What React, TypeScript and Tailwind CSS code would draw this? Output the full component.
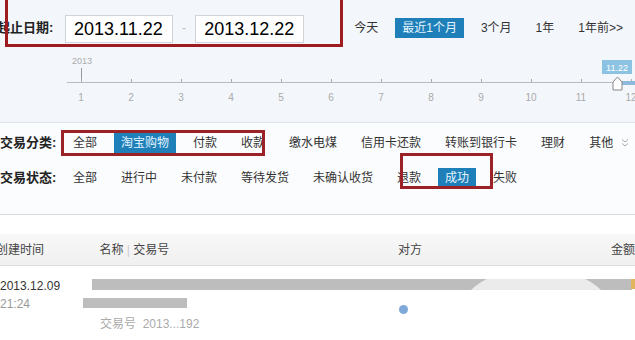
const FONT = { fontFamily: '"Liberation Sans", "Noto Sans CJK SC", sans-serif' };

const RANGES = ['今天', '最近1个月', '3个月', '1年', '1年前>>'];
const TYPES = ['全部', '淘宝购物', '付款', '收款', '缴水电煤', '信用卡还款', '转账到银行卡', '理财', '其他'];
const STATES = ['全部', '进行中', '未付款', '等待发货', '未确认收货', '退款', '成功', '失败'];

function Item({ label, on }: { label: string; on?: boolean }) {
  return (
    <span
      className={
        'mx-[5px] whitespace-nowrap px-[7px] leading-[20px] ' +
        (on ? 'bg-[#1f7fb9] text-[#e4f5ff]' : 'text-[#333]')
      }
    >
      {label}
    </span>
  );
}

function Timeline() {
  const months = Array.from({ length: 12 }, (_, i) => i + 1);
  return (
    <svg width="635" height="76" className="block">
      <text x="72" y="18" fontSize="9" fill="#aaa" fontFamily="Liberation Sans, sans-serif">2013</text>
      <line x1="81.5" y1="22" x2="81.5" y2="36" stroke="#999" />
      <line x1="67" y1="36.5" x2="635" y2="36.5" stroke="#bbb" />
      {months.map((m) => (
        <g key={m}>
          <line x1={81.5 + (m - 1) * 50} y1="33" x2={81.5 + (m - 1) * 50} y2="36" stroke="#aaa" />
          <text
            x={81 + (m - 1) * 50}
            y="55"
            fontSize="10"
            fill="#aaa"
            textAnchor="middle"
            fontFamily="Liberation Sans, sans-serif"
          >
            {m}
          </text>
        </g>
      ))}
      <rect x="620" y="35" width="15" height="4" fill="#8db9da" />
      <rect x="602" y="14" width="30" height="14" fill="#8cc3e3" />
      <text x="617" y="25" fontSize="9" fill="#fff" textAnchor="middle" fontFamily="Liberation Sans, sans-serif">11.22</text>
      <path d="M613 36 L617.5 31 L622 36 L622 44 L613 44 Z" fill="#fff" stroke="#888" />
    </svg>
  );
}

export default function App() {
  return (
    <div className="relative h-[340px] w-[635px] overflow-hidden bg-white text-[12px]" style={FONT}>
      <div className="bg-[#f3f7fb]">
        <div className="flex h-[46px] items-end pb-[3px]">
          <span className="ml-[-3px] w-[70px] self-center pt-[12px] text-[13px] font-bold text-[#222]">起止日期:</span>
          <div className="flex h-[28px] w-[111px] items-center border border-[#cfd4d8] bg-white pl-[8px] text-[18px] text-black">
            2013.11.22
          </div>
          <span className="w-[23px] self-center pt-[12px] text-center text-[#bbb]">-</span>
          <div className="flex h-[28px] w-[112px] items-center border border-[#cfd4d8] bg-white pl-[8px] text-[18px] text-black">
            2013.12.22
          </div>
          <div className="ml-[38px] flex items-center self-center pt-[12px]">
            {RANGES.map((r) => (
              <Item key={r} label={r} on={r === '最近1个月'} />
            ))}
          </div>
        </div>
        <Timeline />
      </div>

      <div className="h-[92px] border-t border-[#dde3e8] bg-[#fbfcfd] pt-[7px]">
        <div className="flex h-[26px] items-center">
          <span className="w-[61px] text-[13px] font-bold text-[#222]">交易分类:</span>
          {TYPES.map((t) => (
            <Item key={t} label={t} on={t === '淘宝购物'} />
          ))}
          <svg width="8" height="10" viewBox="0 0 8 10" className="ml-[-4px]">
            <path d="M1 1.5 L4 4 L7 1.5 M1 5.5 L4 8 L7 5.5" fill="none" stroke="#aaa" strokeWidth="1" />
          </svg>
        </div>
        <div className="mt-[9px] flex h-[26px] items-center">
          <span className="w-[61px] text-[13px] font-bold text-[#222]">交易状态:</span>
          {STATES.map((t) => (
            <Item key={t} label={t} on={t === '成功'} />
          ))}
        </div>
      </div>

      <div className="h-[20px] border-t border-[#d8dde2]" />

      <div className="flex h-[32px] items-center border-b border-[#dcdcdc] bg-gradient-to-b from-[#f8f8f8] to-[#f0f0f0] text-[12px] text-[#444]">
        <span className="ml-[-4px] w-[104px]">创建时间</span>
        <span className="w-[300px]">
          名称 <span className="text-[#ccc]">|</span> 交易号
        </span>
        <span className="w-[214px]">对方</span>
        <span className="whitespace-nowrap">金额</span>
      </div>

      <div className="relative flex pt-[11px]">
        <div className="w-[100px] leading-[18px]">
          <div className="text-[#333]">2013.12.09</div>
          <div className="text-[#999]">21:24</div>
        </div>
        <div className="flex-1 pt-[38px] text-[#aaa]">交易号&nbsp;&nbsp;2013...192</div>
        <div className="absolute left-[92px] top-[13px] h-[11px] w-[540px] bg-[#bdbdbd]" />
        <div className="absolute left-[83px] top-[32px] h-[10px] w-[104px] bg-[#bdbdbd]" />
        <div className="absolute left-[399px] top-[39px] h-[9px] w-[9px] rounded-full bg-[#7fa9d8]" />
        <div className="absolute left-[631px] top-[13px] h-[10px] w-[4px] bg-[#e2b560]" />
        <div className="absolute left-[453px] top-[7px] h-[80px] w-[166px] rounded-t-[60px] bg-white/70" />
        <div className="absolute left-[480px] top-[26px] h-[60px] w-[120px] bg-white" />
      </div>

      <div className="absolute left-[5px] top-[-3px] h-[50px] w-[338px] border-[3px] border-[#9e1b20]" />
      <div className="absolute left-[61px] top-[130px] h-[26px] w-[204px] border-[3px] border-[#9b2328]" />
      <div className="absolute left-[400px] top-[153px] h-[36px] w-[93px] border-[3px] border-[#9b2328]" />
    </div>
  );
}
